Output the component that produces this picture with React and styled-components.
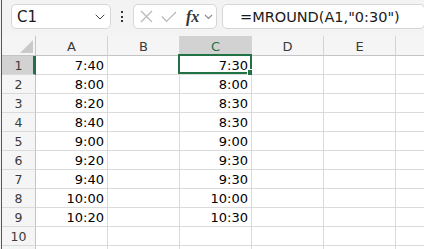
import React from 'react';
import styled, { createGlobalStyle, css } from 'styled-components';
import { ChevronDown } from 'lucide-react';

const GREEN = '#217346';

const GlobalStyle = createGlobalStyle`
  html, body {
    margin: 0;
    padding: 0;
    background: #f3f3f3;
    overflow: hidden;
  }
  body {
    font-family: "DejaVu Sans", sans-serif;
  }
`;

const Frame = styled.div`
  width: 423px;
  height: 249px;
  margin-left: 1px;
  border-left: 1px solid ${GREEN};
  overflow: hidden;
  display: flex;
  flex-direction: column;
`;

const Toolbar = styled.div`
  height: 36px;
  flex: none;
  display: flex;
  align-items: flex-start;
  padding: 4px 0 0 9px;
  box-sizing: border-box;
  background: #f3f3f3;
`;

const Box = styled.div`
  height: 25px;
  box-sizing: border-box;
  background: #fff;
  border: 1px solid #d6d6d6;
  border-radius: 5px;
  display: flex;
  align-items: center;
`;

const NameBox = styled(Box)`
  width: 100px;
  padding: 0 2px 0 5px;
  justify-content: space-between;
  font-size: 15px;
  color: #1a1a1a;
`;

const Dots = styled.div`
  width: 22px;
  height: 25px;
  display: flex;
  flex-direction: column;
  align-items: center;
  justify-content: center;
  gap: 2.5px;
  span {
    width: 2px;
    height: 2px;
    background: #333;
  }
`;

const FxBox = styled(Box)`
  width: 84px;
  padding: 0 2px 0 6px;
  gap: 8px;
  svg { flex: none; }
`;

const Fx = styled.span`
  font-family: "Liberation Serif", serif;
  font-style: italic;
  font-weight: bold;
  font-size: 16px;
  color: #333;
  margin-left: 1px;
`;

const FormulaBox = styled(Box)`
  flex: 1;
  margin-left: 5px;
  padding-left: 17px;
  font-size: 14.5px;
  color: #1a1a1a;
  border-right: 1px solid #d6d6d6;
`;

const Grid = styled.div`
  display: grid;
  grid-template-columns: 34px repeat(5, 72px) 1fr;
  grid-template-rows: 20px;
  grid-auto-rows: 19px;
  font-size: 13px;
  color: #000;
`;

const Cell = styled.div`
  position: relative;
  box-sizing: border-box;
  border-right: 1px solid #dadada;
  border-bottom: 1px solid #dadada;
  background: #fff;
  display: flex;
  align-items: center;
  justify-content: flex-end;
  padding: 1px 3px 0 0;
  white-space: nowrap;
`;

const Head = styled.div`
  position: relative;
  box-sizing: border-box;
  background: #f5f5f5;
  border-right: 1px solid #d4d4d4;
  border-bottom: 1px solid #c4c4c4;
  display: flex;
  align-items: center;
  justify-content: center;
  color: #3a3a3a;
  font-size: 13px;
  padding-top: 1px;
  ${p => p.$active && css`
    background: #d2d2d2;
    color: ${GREEN};
    border-bottom: 2px solid ${GREEN};
    padding-top: 2px;
  `}
`;

const RowHead = styled.div`
  box-sizing: border-box;
  background: #f5f5f5;
  border-right: 1px solid #c4c4c4;
  border-bottom: 1px solid #dadada;
  display: flex;
  align-items: center;
  justify-content: center;
  color: #3a3a3a;
  font-size: 12.5px;
  padding-top: 1px;
  ${p => p.$active && css`
    background: #d2d2d2;
    border-right: 3px solid ${GREEN};
    padding-left: 2px;
  `}
`;

const Corner = styled(Head)`
  border-right-color: #c4c4c4;
  justify-content: flex-end;
  align-items: flex-end;
  padding: 0 2px 2px 0;
`;

const Selection = styled.div`
  position: absolute;
  left: -2px;
  top: -2px;
  right: -1px;
  bottom: 0;
  border: 2px solid ${GREEN};
  pointer-events: none;
  &::after {
    content: '';
    position: absolute;
    right: -3px;
    bottom: -3px;
    width: 5px;
    height: 5px;
    background: ${GREEN};
    box-shadow: 0 0 0 1px #fff;
  }
`;

const colsA = ['7:40', '8:00', '8:20', '8:40', '9:00', '9:20', '9:40', '10:00', '10:20'];
const colsC = ['7:30', '8:00', '8:30', '8:30', '9:00', '9:30', '9:30', '10:00', '10:30'];
const letters = ['A', 'B', 'C', 'D', 'E', ''];

const App = () => {
  const rows = [];
  for (let r = 1; r <= 11; r++) {
    rows.push(
      <RowHead key={'h' + r} $active={r === 1}>{r <= 10 ? r : ''}</RowHead>,
      <Cell key={'a' + r}>{colsA[r - 1] || ''}</Cell>,
      <Cell key={'b' + r} />,
      <Cell key={'c' + r}>
        {colsC[r - 1] || ''}
        {r === 1 && <Selection />}
      </Cell>,
      <Cell key={'d' + r} />,
      <Cell key={'e' + r} />,
      <Cell key={'f' + r} />
    );
  }
  return (
    <>
      <GlobalStyle />
      <Frame>
        <Toolbar>
          <NameBox>
            <span>C1</span>
            <ChevronDown size={16} strokeWidth={1.5} color="#444" />
          </NameBox>
          <Dots><span /><span /><span /></Dots>
          <FxBox>
            <svg width="13" height="13" viewBox="0 0 13 13">
              <path d="M1 1 L12 12 M12 1 L1 12" stroke="#b8b8b8" strokeWidth="1.2" fill="none" />
            </svg>
            <svg width="16" height="12" viewBox="0 0 16 12">
              <path d="M1 5.5 L5.5 10.5 L15 1" stroke="#b8b8b8" strokeWidth="1.2" fill="none" />
            </svg>
            <Fx>fx</Fx>
            <svg width="9" height="6" viewBox="0 0 9 6" style={{ marginLeft: -3 }}>
              <path d="M1 1 L4.5 4.5 L8 1" stroke="#888" strokeWidth="1.1" fill="none" />
            </svg>
          </FxBox>
          <FormulaBox>=MROUND(A1,"0:30")</FormulaBox>
        </Toolbar>
        <Grid>
          <Corner>
            <svg width="13" height="13" viewBox="0 0 13 13">
              <polygon points="13,0 13,13 0,13" fill="#c9c9c9" />
            </svg>
          </Corner>
          {letters.map(l => (
            <Head key={l || 'F'} $active={l === 'C'}>{l}</Head>
          ))}
          {rows}
        </Grid>
      </Frame>
    </>
  );
};

export default App;
